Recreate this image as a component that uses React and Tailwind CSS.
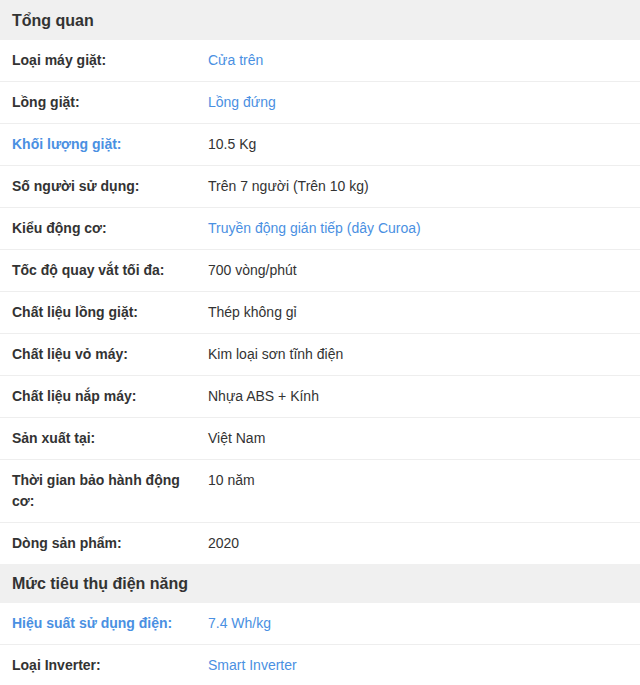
const sections = [
  {
    title: "Tổng quan",
    rows: [
      { label: "Loại máy giặt:", value: "Cửa trên", valueLink: true },
      { label: "Lồng giặt:", value: "Lồng đứng", valueLink: true },
      { label: "Khối lượng giặt:", value: "10.5 Kg", labelLink: true },
      { label: "Số người sử dụng:", value: "Trên 7 người (Trên 10 kg)" },
      { label: "Kiểu động cơ:", value: "Truyền động gián tiếp (dây Curoa)", valueLink: true },
      { label: "Tốc độ quay vắt tối đa:", value: "700 vòng/phút" },
      { label: "Chất liệu lồng giặt:", value: "Thép không gỉ" },
      { label: "Chất liệu vỏ máy:", value: "Kim loại sơn tĩnh điện" },
      { label: "Chất liệu nắp máy:", value: "Nhựa ABS + Kính" },
      { label: "Sản xuất tại:", value: "Việt Nam" },
      { label: "Thời gian bảo hành động cơ:", value: "10 năm" },
      { label: "Dòng sản phẩm:", value: "2020" },
    ],
  },
  {
    title: "Mức tiêu thụ điện năng",
    rows: [
      { label: "Hiệu suất sử dụng điện:", value: "7.4 Wh/kg", labelLink: true, valueLink: true },
      { label: "Loại Inverter:", value: "Smart Inverter", valueLink: true },
    ],
  },
];

function SpecRow({ row, last }) {
  return (
    <li className={`flex px-3 py-[10px] text-[14px] leading-[21px] ${last ? "" : "border-b border-[#eeeeee]"}`}>
      <span className={`w-[196px] shrink-0 pr-4 font-bold ${row.labelLink ? "text-[#4a90e2]" : "text-[#333333]"}`}>
        {row.label}
      </span>
      <span className={row.valueLink ? "text-[#4a90e2]" : "text-[#333333]"}>{row.value}</span>
    </li>
  );
}

export default function App() {
  return (
    <div className="w-[640px] bg-white font-['Liberation_Sans',Arial,sans-serif]">
      {sections.map((section, i) => (
        <section key={section.title}>
          <h3
            className={`bg-[#f0f0f0] px-3 pb-[9px] text-[16px] font-bold leading-[21px] text-[#333333] ${
              i === 0 ? "pt-[10px]" : "pt-[9px]"
            }`}
          >
            {section.title}
          </h3>
          <ul>
            {section.rows.map((row, index) => (
              <SpecRow key={row.label} row={row} last={index === section.rows.length - 1} />
            ))}
          </ul>
        </section>
      ))}
    </div>
  );
}
